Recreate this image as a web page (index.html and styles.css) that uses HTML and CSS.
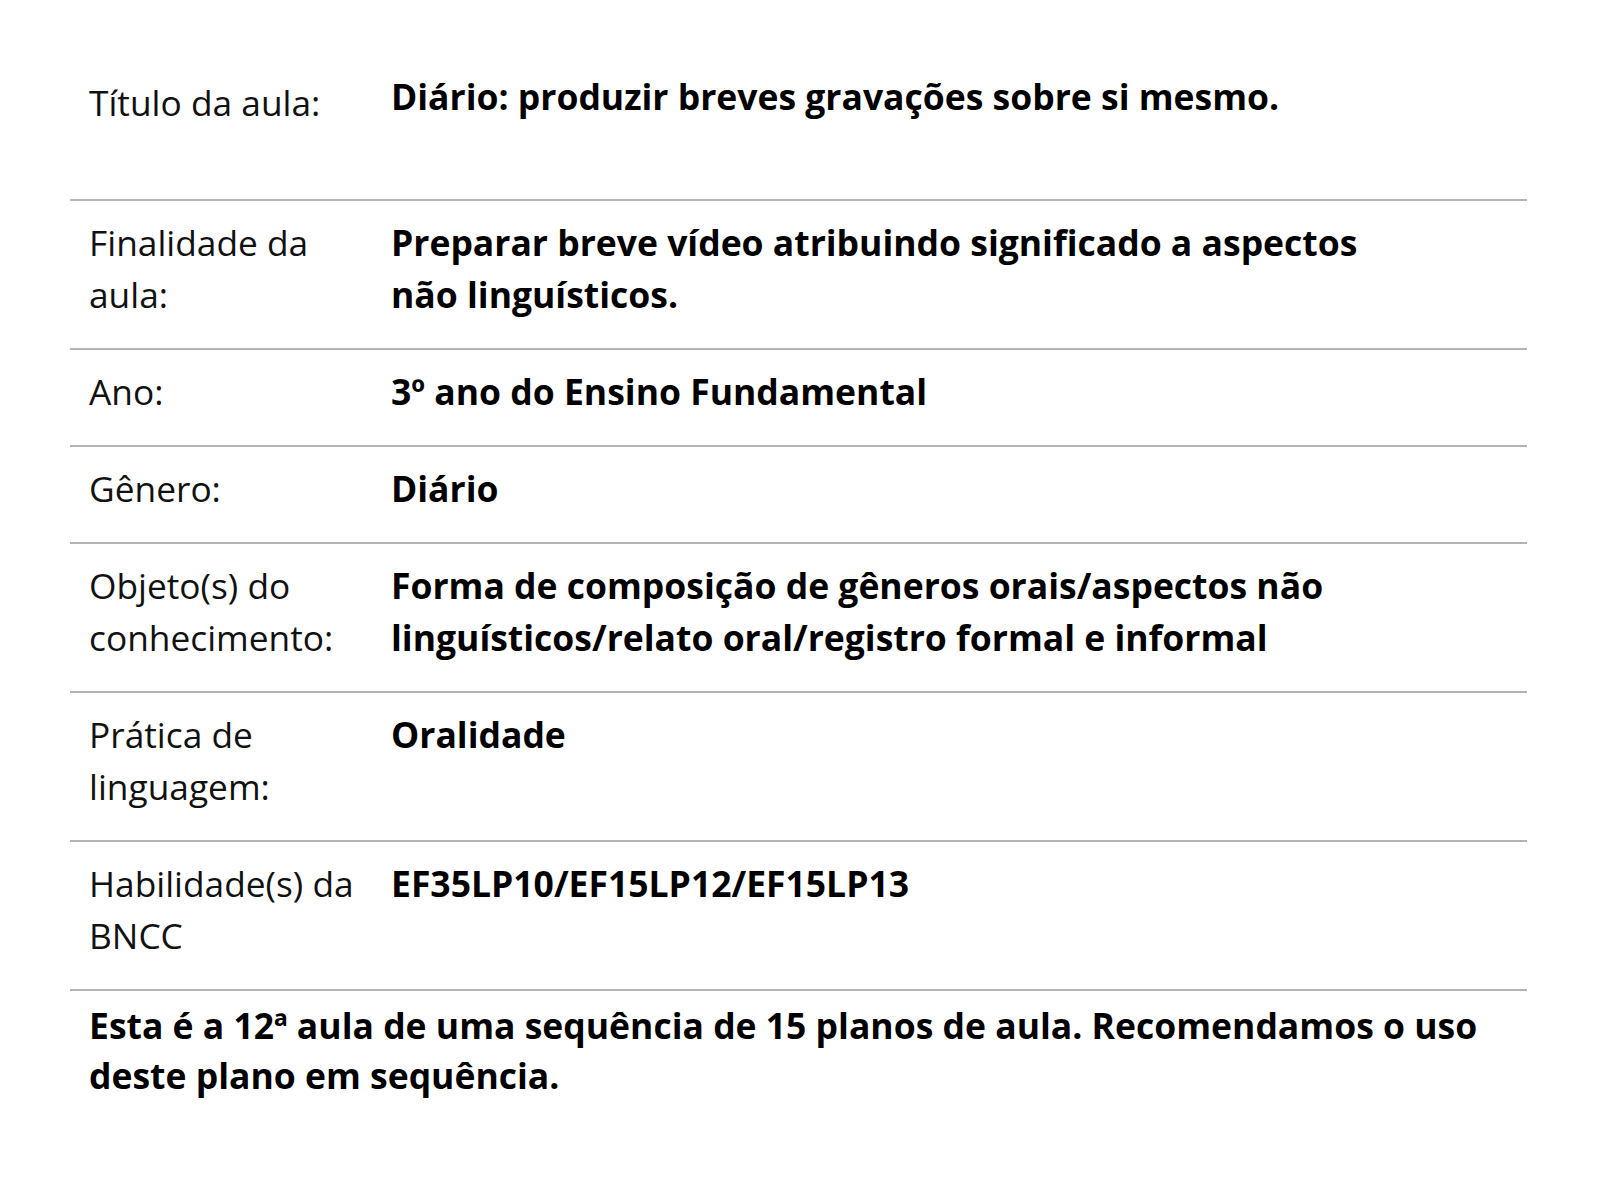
FILE: index.html
```html
<!DOCTYPE html>
<html lang="pt-BR">
<head>
<meta charset="utf-8">
<title>Plano de aula</title>
<link rel="stylesheet" href="styles.css">
</head>
<body>
<main class="plan">
  <div class="row row-title">
    <div class="label">Título da aula:</div>
    <div class="value value-title">Diário: produzir breves gravações sobre si mesmo.</div>
  </div>
  <div class="row">
    <div class="label">Finalidade da aula:</div>
    <div class="value">Preparar breve vídeo atribuindo significado a aspectos não linguísticos.</div>
  </div>
  <div class="row">
    <div class="label">Ano:</div>
    <div class="value">3º ano do Ensino Fundamental</div>
  </div>
  <div class="row">
    <div class="label">Gênero:</div>
    <div class="value">Diário</div>
  </div>
  <div class="row">
    <div class="label">Objeto(s) do conhecimento:</div>
    <div class="value">Forma de composição de gêneros orais/aspectos não linguísticos/relato oral/registro formal e informal</div>
  </div>
  <div class="row">
    <div class="label">Prática de linguagem:</div>
    <div class="value">Oralidade</div>
  </div>
  <div class="row">
    <div class="label">Habilidade(s) da BNCC</div>
    <div class="value">EF35LP10/EF15LP12/EF15LP13</div>
  </div>
  <p class="note">Esta é a 12ª aula de uma sequência de 15 planos de aula. Recomendamos o uso deste plano em sequência.</p>
</main>
</body>
</html>
```

FILE: styles.css
```css
html, body {
  margin: 0;
  padding: 0;
  background: #ffffff;
}

body {
  font-family: "Open Sans", "Noto Sans", sans-serif;
  color: #000000;
}

.plan {
  width: 1457px;
  margin: 60px 0 0 70px;
}

.row {
  display: grid;
  grid-template-columns: 321px 990px;
  border-bottom: 2px solid #b4b4b4;
}

.label {
  padding: 15px 10px 28px 19px;
  font-size: 35.3px;
  line-height: 52px;
  font-weight: 400;
  color: #111111;
}

.value {
  padding: 15px 0 28px 0;
  font-size: 35.5px;
  line-height: 52px;
  font-weight: 700;
}

.row-title .label {
  padding-top: 16px;
  padding-bottom: 71px;
}

.row-title .value {
  padding-top: 10px;
}

.note {
  margin: 0;
  padding: 9px 19px 0 19px;
  font-size: 35.5px;
  line-height: 50px;
  font-weight: 700;
}
```
